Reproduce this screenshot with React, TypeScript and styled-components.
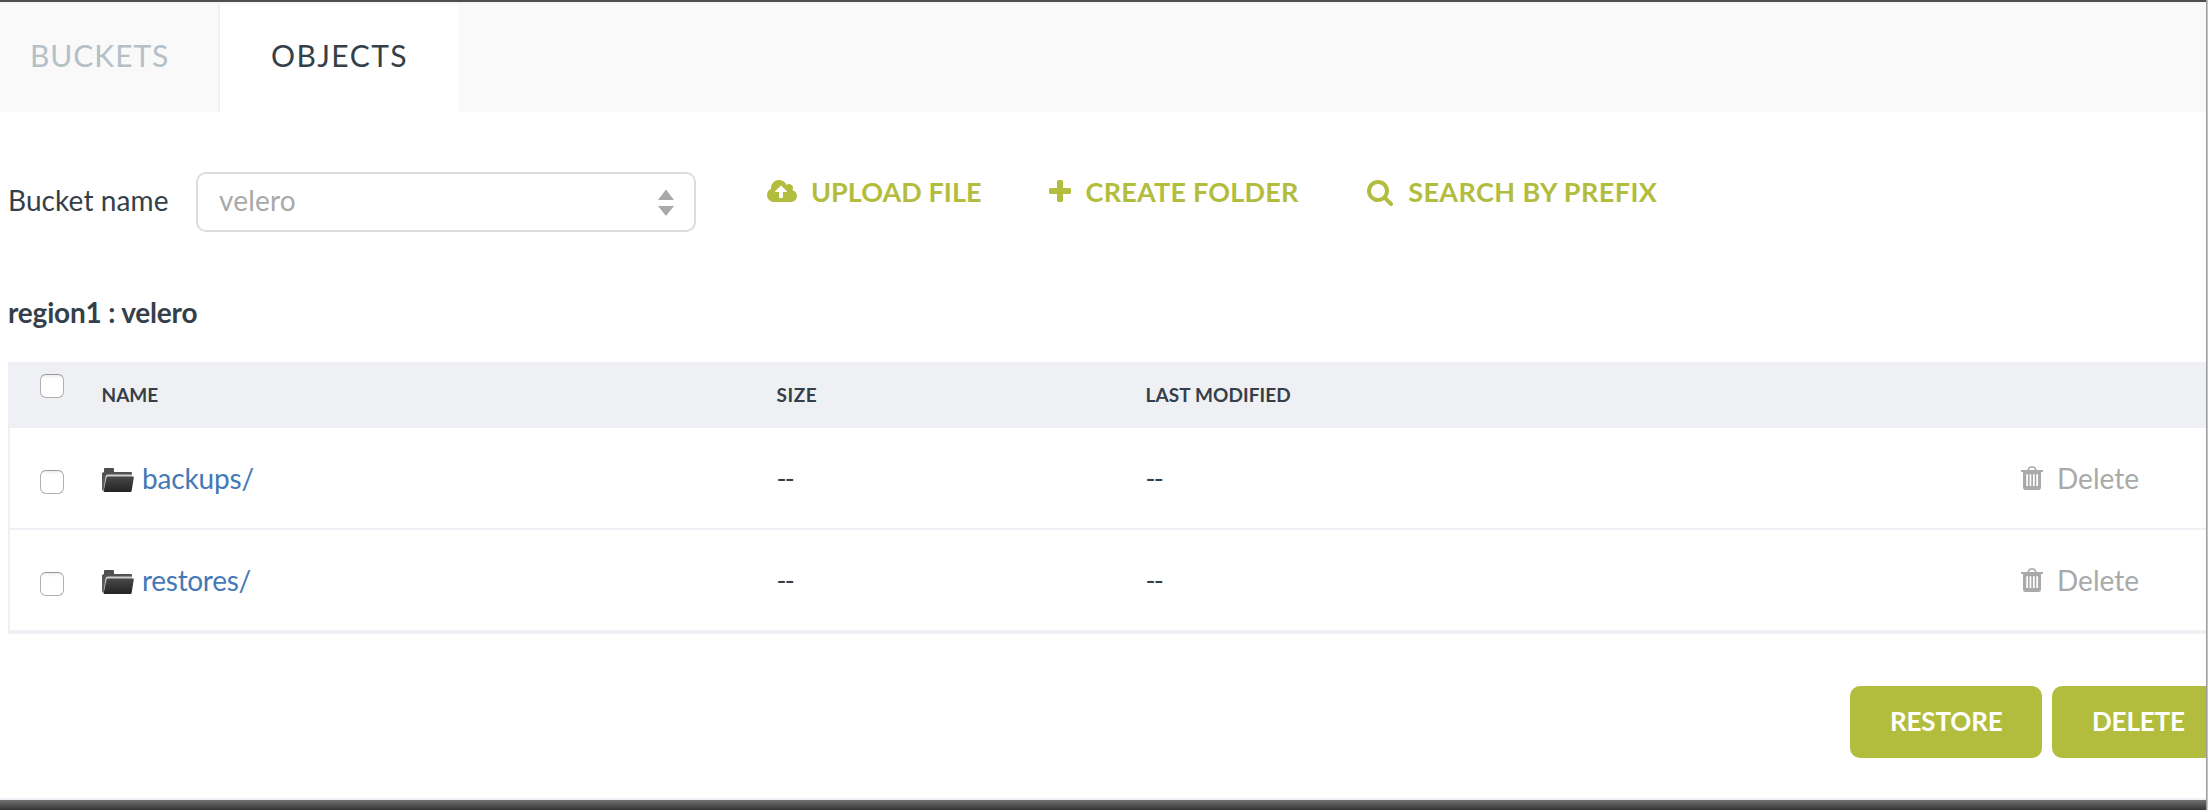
import React from 'react';
import styled, { createGlobalStyle } from 'styled-components';

const ink = '#353f49';
const olive = '#b2bd3d';
const line = '#eff0f5';
const muted = '#a9a9a9';

const GlobalStyle = createGlobalStyle`
  * { box-sizing: border-box; }
  body {
    margin: 0;
    background: #fff;
    color: ${ink};
    font-family: Lato, "Open Sans", sans-serif;
    font-size: 28px;
    line-height: 36px;
    overflow: hidden;
  }
`;

const Page = styled.div`
  display: flex;
  height: 810px;
  overflow: hidden;
`;

const Main = styled.main`
  flex: 1;
  min-width: 0;
  display: flex;
  flex-direction: column;
  border-top: 2px solid #504d4a;
  overflow: hidden;
`;

const RightEdge = styled.div`
  width: 2px;
  background: linear-gradient(90deg, #9c9c9c 50%, #c4c4c4 50%);
`;

const TabBar = styled.nav`
  display: flex;
  height: 110px;
  border-top: 2px solid #f6f6fa;
  background: #f9f9f9;
`;

const Tab = styled.button<{ $active?: boolean }>`
  width: ${p => (p.$active ? 238 : 220)}px;
  padding: 0 0 6px ${p => (p.$active ? 51 : 30)}px;
  border: 0;
  border-right: ${p => (p.$active ? '0' : `2px solid ${line}`)};
  background: ${p => (p.$active ? '#fff' : 'transparent')};
  color: ${p => (p.$active ? ink : '#b4c0c7')};
  font: 400 30px/36px Lato, sans-serif;
  letter-spacing: ${p => (p.$active ? 1.5 : 0.95)}px;
  text-align: left;
`;

const Controls = styled.div`
  display: flex;
  align-items: flex-start;
  height: 60px;
  margin: 60px 0 0 8px;
`;

const Label = styled.label`
  width: 188px;
  padding-top: 10px;
  letter-spacing: 0.1px;
  white-space: nowrap;
`;

const Select = styled.div`
  display: flex;
  align-items: center;
  justify-content: space-between;
  width: 500px;
  height: 60px;
  padding: 0 20px 0 21px;
  border: 2px solid #dcdcdc;
  border-radius: 10px;
  color: ${muted};
`;

const SelectValue = styled.span`
  padding-bottom: 4px;
  letter-spacing: 0.2px;
`;

const Action = styled.a<{ $gap: number; $before: number; $spacing: number }>`
  display: flex;
  gap: ${p => p.$gap}px;
  margin-left: ${p => p.$before}px;
  padding-top: 2px;
  color: ${olive};
  font-size: 27px;
  font-weight: 700;
  letter-spacing: ${p => p.$spacing}px;
  white-space: nowrap;
`;

const ActionIcon = styled.svg`
  flex: none;
  margin-top: 6px;
  fill: currentColor;
`;

const PathTitle = styled.h2`
  margin: 62px 0 32px 8px;
  font-size: 28px;
  font-weight: 700;
  line-height: 36px;
  letter-spacing: -0.2px;
`;

const Table = styled.section`
  margin-left: 8px;
  border-left: 2px solid ${line};
  border-bottom: 4px solid ${line};
`;

const Row = styled.div`
  display: grid;
  grid-template-columns: 92px 675px 369px 873px 1fr;
  height: 102px;
  border-bottom: 2px solid ${line};
  align-items: center;

  &:last-child {
    height: 100px;
    border-bottom: 0;
  }
`;

const HeadRow = styled(Row)`
  height: 66px;
  border: 0;
  background: #eff0f4;
  font-size: 19px;
  font-weight: 700;
`;

const HeadCell = styled.span<{ $spacing?: number }>`
  margin-left: -0.5px;
  letter-spacing: ${p => p.$spacing ?? 0}px;
`;

const Checkbox = styled.input<{ $raised?: boolean }>`
  appearance: none;
  width: 24px;
  height: 24px;
  margin: 0 0 0 30px;
  align-self: start;
  margin-top: ${p => (p.$raised ? 12 : 42)}px;
  border: 1.5px solid #b0b0b0;
  border-top-color: #979797;
  border-radius: 6px;
  background: linear-gradient(#efefef, #fff 4px);
`;

const NameCell = styled.span`
  display: flex;
  align-items: center;
  gap: 8px;
`;

const FolderLink = styled.a<{ $spacing: number }>`
  color: #4479b6;
  letter-spacing: ${p => p.$spacing}px;
`;

const FolderSvg = styled.svg`
  flex: none;
  margin-top: 4px;
`;

const Empty = styled.span`
  margin-left: -0.5px;
  font-size: 27px;
  letter-spacing: -1.9px;
`;

const DeleteLink = styled.a`
  display: flex;
  align-items: center;
  gap: 14px;
  padding-left: 2px;
  color: ${muted};
`;

const Footer = styled.footer`
  display: flex;
  gap: 10px;
  margin: 52px 0 0 1850px;
`;

const Button = styled.button`
  flex: none;
  width: 192px;
  height: 72px;
  padding: 0 0 2px 40px;
  border: 0;
  border-radius: 10px;
  background: ${olive};
  color: #fff;
  font: 700 26px/36px Lato, sans-serif;
  text-align: left;
  letter-spacing: -0.15px;
`;

const BottomEdge = styled.div`
  flex: none;
  height: 12px;
  margin-top: auto;
  border-top: 2px solid ${line};
  background: linear-gradient(#70706f, #353535) padding-box;
`;

const CloudUpload = () => (
  <ActionIcon width="30" height="22" viewBox="0 256 1920 1408">
    <path d="M1280 992q0-14-9-23l-352-352q-9-9-23-9t-23 9l-351 351q-10 12-10 24 0 14 9 23t23 9h224v352q0 13 9.5 22.5t22.5 9.5h192q13 0 22.5-9.5t9.5-22.5v-352h224q13 0 22.5-9.5t9.5-22.5zm640 288q0 159-112.5 271.5t-271.5 112.5h-1088q-185 0-316.5-131.5t-131.5-316.5q0-130 70-240t188-165q-2-30-2-43 0-212 150-362t362-150q156 0 285.5 87t188.5 231q71-62 166-62 106 0 181 75t75 181q0 76-41 138 130 31 213.5 135.5t83.5 238.5z" />
  </ActionIcon>
);

const Plus = () => (
  <ActionIcon width="22" height="22" viewBox="192 128 1408 1408">
    <path d="M1600 736v192q0 40-28 68t-68 28h-416v416q0 40-28 68t-68 28h-192q-40 0-68-28t-28-68v-416h-416q-40 0-68-28t-28-68v-192q0-40 28-68t68-28h416v-416q0-40 28-68t68-28h192q40 0 68 28t28 68v416h416q40 0 68 28t28 68z" />
  </ActionIcon>
);

const Search = () => (
  <ActionIcon width="26" height="26" viewBox="64 128 1664 1664">
    <path d="M1216 832q0-185-131.5-316.5t-316.5-131.5-316.5 131.5-131.5 316.5 131.5 316.5 316.5 131.5 316.5-131.5 131.5-316.5zm512 832q0 52-38 90t-90 38q-54 0-90-38l-343-342q-179 124-399 124-143 0-273.5-55.5t-225-150-150-225-55.5-273.5 55.5-273.5 150-225 225-150 273.5-55.5 273.5 55.5 225 150 150 225 55.5 273.5q0 220-124 399l343 343q37 37 37 90z" />
  </ActionIcon>
);

const Trash = () => (
  <svg width="22" height="24" viewBox="0 0 22 24">
    <path d="M7 5 8 2Q8.400 1 9.500 1h3Q13.600 1 14 2l1 3" fill="none" stroke="currentColor" strokeWidth="1.700" />
    <path
      fill="currentColor"
      fillRule="evenodd"
      d="M.5 4h21q.5 0 .5.5v.9q0 .5-.5.5H20V21q0 3-2.500 3h-13Q2 24 2 21V5.900H.5Q0 5.900 0 5.400V4.500Q0 4 .5 4ZM5.300 8.200v11.800h1.700V8.200ZM8.600 8.200v11.800h1.700V8.200ZM12 8.200v11.800h1.700V8.200ZM15.300 8.200v11.800h1.700V8.200Z"
    />
  </svg>
);

const Folder = () => (
  <FolderSvg width="32" height="26" viewBox="0 0 32 26">
    <defs>
      <linearGradient id="folderFront" x1="0" y1="0" x2="0" y2="1">
        <stop offset="0" stopColor="#494949" />
        <stop offset="1" stopColor="#252324" />
      </linearGradient>
      <linearGradient id="folderBack" x1="0" y1="0" x2="0" y2="1">
        <stop offset="0" stopColor="#4d4d4d" />
        <stop offset="1" stopColor="#636363" />
      </linearGradient>
    </defs>
    <path d="M0 23V6l2-1V2q0-1 1-1h8q1 0 1 1v3h17q1 0 1 1v5L2 24Z" fill="url(#folderBack)" />
    <path d="M1.500 24 3.500 9.500Q3.800 7.500 6 7.500h24v3H6L2.500 24Z" fill="#cfd0ce" />
    <path d="M4.500 10.500Q4.700 9.500 6 9.500h25q1 0 .8 1L29.600 24q-.2 1-1.200 1H2.500q-1 0-.8-1Z" fill="url(#folderFront)" />
  </FolderSvg>
);

const SortArrows = () => (
  <svg width="16" height="28" viewBox="0 0 16 28">
    <path d="M8 1.500 16 12H0ZM0 18h16L8 28Z" fill={muted} />
  </svg>
);

const folders = [
  { name: 'backups/', spacing: -0.15 },
  { name: 'restores/', spacing: -0.3 },
];

export default function App() {
  return (
    <>
      <GlobalStyle />
      <Page>
        <Main>
          <TabBar>
            <Tab>BUCKETS</Tab>
            <Tab $active>OBJECTS</Tab>
          </TabBar>
          <Controls>
            <Label>Bucket name</Label>
            <Select>
              <SelectValue>velero</SelectValue>
              <SortArrows />
            </Select>
            <Action $before={71} $gap={14} $spacing={0.05}>
              <CloudUpload />
              UPLOAD FILE
            </Action>
            <Action $before={67} $gap={15} $spacing={0.22}>
              <Plus />
              CREATE FOLDER
            </Action>
            <Action $before={68.5} $gap={15} $spacing={0.42}>
              <Search />
              SEARCH BY PREFIX
            </Action>
          </Controls>
          <PathTitle>region1 : velero</PathTitle>
          <Table>
            <HeadRow>
              <Checkbox type="checkbox" $raised />
              <HeadCell>NAME</HeadCell>
              <HeadCell $spacing={0.6}>SIZE</HeadCell>
              <HeadCell $spacing={0.1}>LAST MODIFIED</HeadCell>
            </HeadRow>
            {folders.map(folder => (
              <Row key={folder.name}>
                <Checkbox type="checkbox" />
                <NameCell>
                  <Folder />
                  <FolderLink $spacing={folder.spacing}>{folder.name}</FolderLink>
                </NameCell>
                <Empty>--</Empty>
                <Empty>--</Empty>
                <DeleteLink>
                  <Trash />
                  Delete
                </DeleteLink>
              </Row>
            ))}
          </Table>
          <Footer>
            <Button>RESTORE</Button>
            <Button>DELETE</Button>
          </Footer>
          <BottomEdge />
        </Main>
        <RightEdge />
      </Page>
    </>
  );
}
